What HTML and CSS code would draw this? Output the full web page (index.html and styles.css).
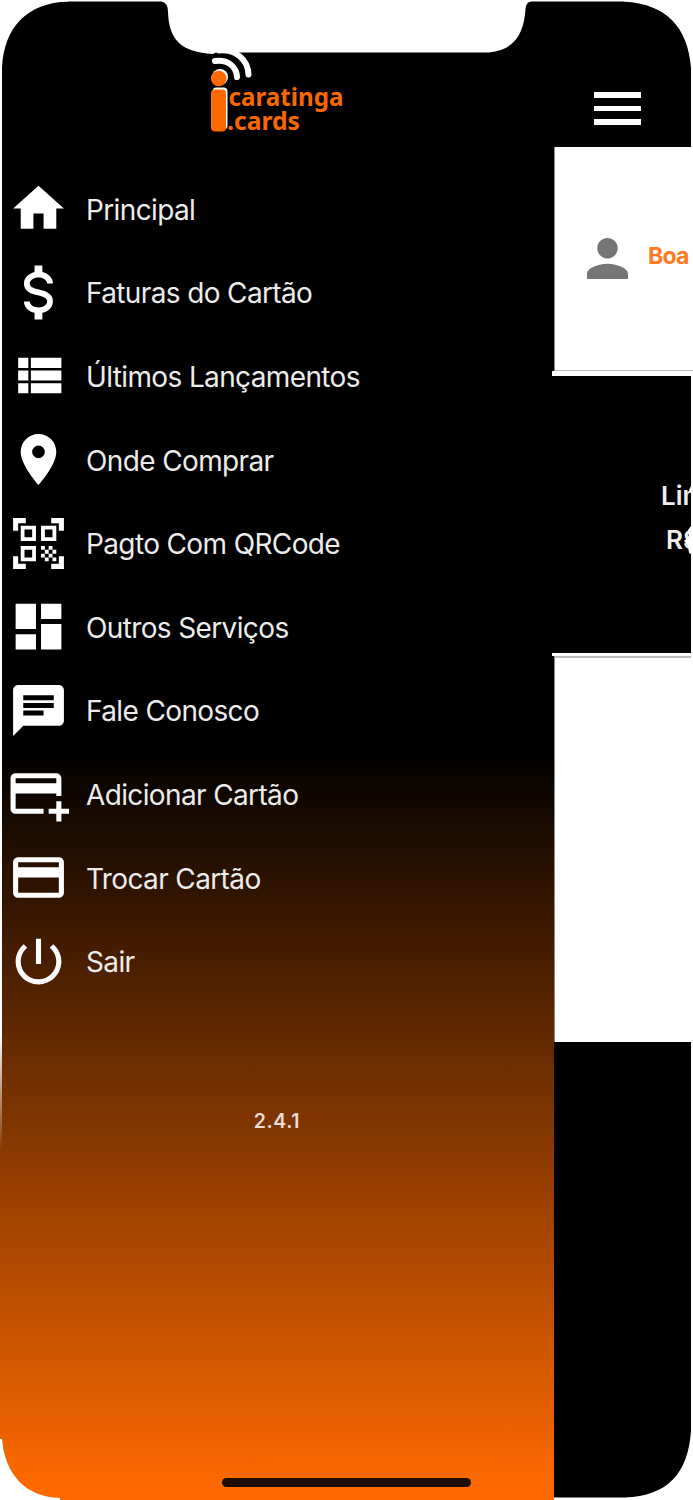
FILE: index.html
```html
<!DOCTYPE html>
<html lang="pt-BR">
<head>
<meta charset="utf-8">
<title>icaratinga.cards</title>
<link rel="stylesheet" href="styles.css">
</head>
<body>
<div class="phone">
  <aside class="drawer">
    <header class="brand">
      <svg class="logo" width="140" height="90" viewBox="208 47 140 90" role="img" aria-label="icaratinga.cards">
        <g fill="none" stroke="#fff" stroke-width="6" stroke-linecap="round">
          <path d="M215 61C228 59 236.500 67 237 77"/>
          <path d="M219 50.500C236 49 248 60 248.500 74.500"/>
        </g>
        <circle cx="220" cy="77" r="8" fill="#fff"/>
        <rect x="212.500" y="87.500" width="15" height="42" rx="4" fill="#fff"/>
        <circle cx="218.700" cy="78.500" r="7.800" fill="#ff6a00"/>
        <rect x="211" y="89.500" width="15" height="42" rx="4" fill="#ff6a00"/>
        <text class="wordmark" x="228.500" y="105.500" textLength="115" lengthAdjust="spacingAndGlyphs">caratinga</text>
        <text class="wordmark" x="227" y="129.500" textLength="73" lengthAdjust="spacingAndGlyphs">.cards</text>
      </svg>
    </header>
    <nav class="menu">
      <a class="item"><svg class="icon" viewBox="0 0 24 24"><path d="M10 20v-6h4v6h5v-8h3L12 3 2 12h3v8z"/></svg><span class="label">Principal</span></a>
      <a class="item"><svg class="icon" viewBox="0 0 24 24"><path transform="translate(-1.700 -2.200) scale(1.140 1.180)" d="M7,15H9C9,16.080 10.370,17 12,17C13.630,17 15,16.080 15,15C15,13.900 13.960,13.500 11.760,12.970C9.640,12.440 7,11.780 7,9C7,7.210 8.470,5.690 10.650,5.180V3H13.350V5.180C15.530,5.690 17,7.210 17,9H15C15,7.920 13.630,7 12,7C10.370,7 9,7.920 9,9C9,10.100 10.040,10.500 12.240,11.030C14.360,11.560 17,12.220 17,15C17,16.790 15.530,18.310 13.350,18.820V21H10.650V18.820C8.470,18.310 7,16.790 7,15Z"/></svg><span class="label">Faturas do Cartão</span></a>
      <a class="item"><svg class="icon" viewBox="0 0 24 24"><path d="M4 14h4v-4H4v4zm0 5h4v-4H4v4zM4 9h4V5H4v4zm5 5h12v-4H9v4zm0 5h12v-4H9v4zM9 5v4h12V5H9z"/></svg><span class="label">Últimos Lançamentos</span></a>
      <a class="item"><svg class="icon" viewBox="0 0 24 24"><path d="M12 2C8.130 2 5 5.130 5 9c0 5.250 7 13 7 13s7-7.750 7-13c0-3.870-3.130-7-7-7zm0 9.500a2.500 2.500 0 0 1 0-5 2.500 2.500 0 0 1 0 5z"/></svg><span class="label">Onde Comprar</span></a>
      <a class="item"><svg class="icon" viewBox="0 0 24 24"><path d="M9.500 6.500v3h-3v-3h3M11 5H5v6h6V5zM9.500 14.500v3h-3v-3h3M11 13H5v6h6v-6zM17.500 6.500v3h-3v-3h3M19 5h-6v6h6V5zM13 13h1.500v1.500H13zM14.500 14.500H16V16h-1.500zM16 13h1.500v1.500H16zM13 16h1.500v1.500H13zM14.500 17.500H16V19h-1.500zM16 16h1.500v1.500H16zM17.500 14.500H19V16h-1.500zM17.500 17.500H19V19h-1.500zM22 7h-2V4h-3V2h5zM22 22v-5h-2v3h-3v2zM2 22h5v-2H4v-3H2zM2 2v5h2V4h3V2z"/></svg><span class="label">Pagto Com QRCode</span></a>
      <a class="item"><svg class="icon" viewBox="0 0 24 24"><path d="M3 13h8V3H3v10zm0 8h8v-6H3v6zm10 0h8V11h-8v10zm0-18v6h8V3h-8z"/></svg><span class="label">Outros Serviços</span></a>
      <a class="item"><svg class="icon" viewBox="0 0 24 24"><path d="M20 2H4c-1.100 0-2 .9-2 2v18l4-4h14c1.100 0 2-.9 2-2V4c0-1.100-.9-2-2-2zM6 9h12v2H6V9zm8 5H6v-2h8v2zm4-6H6V6h12v2z"/></svg><span class="label">Fale Conosco</span></a>
      <a class="item"><svg class="icon" viewBox="0 0 24 24"><path d="M21,18H24V20H21V23H19V20H16V18H19V15H21V18M19,8V6H3V8H19M19,12H3V18H14V20H3C1.890,20 1,19.100 1,18V6C1,4.890 1.890,4 3,4H19A2,2 0 0,1 21,6V13H19V12Z"/></svg><span class="label">Adicionar Cartão</span></a>
      <a class="item"><svg class="icon" viewBox="0 0 24 24"><path d="M20 4H4c-1.110 0-2 .89-2 2v12c0 1.110.89 2 2 2h16c1.110 0 2-.89 2-2V6c0-1.110-.89-2-2-2zm0 14H4v-6h16v6zm0-10H4V6h16v2z"/></svg><span class="label">Trocar Cartão</span></a>
      <a class="item"><svg class="icon" viewBox="0 0 24 24"><path d="M13 3h-2v10h2V3zm4.830 2.170l-1.420 1.420C17.990 7.860 19 9.810 19 12c0 3.870-3.130 7-7 7s-7-3.130-7-7c0-2.190 1.010-4.140 2.580-5.420L6.170 5.170C4.230 6.820 3 9.260 3 12c0 4.970 4.030 9 9 9s9-4.030 9-9c0-2.740-1.230-5.180-3.170-6.830z"/></svg><span class="label">Sair</span></a>
    </nav>
    <p class="version">2.4.1</p>
  </aside>
  <main class="page">
    <div class="topbar">
      <div class="burger"><span></span><span></span><span></span></div>
    </div>
    <section class="greeting">
      <svg class="avatar" viewBox="4 4 16 16"><path d="M12 12c2.210 0 4-1.790 4-4s-1.790-4-4-4-4 1.790-4 4 1.790 4 4 4zm0 2c-2.670 0-8 1.340-8 4v2h16v-2c0-2.660-5.330-4-8-4z"/></svg>
      <span class="hello">Boa</span>
    </section>
    <div class="rule"></div>
    <section class="limit">
      <span>Lim</span>
      <span class="amount">R$</span>
    </section>
    <div class="rule thin"></div>
    <section class="blank"></section>
  </main>
  <svg class="bezel" width="693" height="1500" viewBox="0 0 693 1500">
    <defs>
      <linearGradient id="edge" x1="0" y1="0" x2="0" y2="1">
        <stop offset=".9" stop-color="#fff"/>
        <stop offset="1" stop-color="#fff" stop-opacity="0"/>
      </linearGradient>
    </defs>
    <g fill="#fff">
      <path d="M0 0H693V1.500H0z"/>
      <path d="M2 0V68C4 27 27 3 68 1.500V0z"/>
      <path d="M691 0V68C688 27 666 4 624 1.500V0z"/>
      <path d="M162 0V1.500Q168 3 168 12C169 40 181 52 213 54L216 52.500H489C515 50 524 33 525.500 9Q526 2 531 1.500V0z"/>
      <path d="M691 0H693V370H691zM691 376H693V1500H691z"/>
      <path d="M0 1439H2C5 1475 26 1497 60 1498V1500H0z"/>
      <path d="M554 1497.500H625C667 1496 688 1474 691 1431H693V1500H554z"/>
      <path d="M691 486L689 490 691 493zM691 526L688 530 689 536 684 541 688 546 689 553 691 554z"/>
    </g>
    <path fill="url(#edge)" d="M0 0H2V1150H0z"/>
  </svg>
  <div class="home-indicator"></div>
</div>
</body>
</html>
```
FILE: styles.css
```css
* { box-sizing: border-box; }

body {
  margin: 0;
  background: #fff;
  font-family: Inter, "Liberation Sans", sans-serif;
}

.phone {
  position: relative;
  display: grid;
  grid-template-columns: 554px 139px;
  width: 693px;
  height: 1500px;
  overflow: hidden;
}

.drawer {
  display: flex;
  flex-direction: column;
  background: linear-gradient(#000 0, #000 750px, #ff6a00 1490px);
}

.brand {
  height: 167px;
  padding: 47px 0 0 208px;
}

.logo { display: block; }

.wordmark {
  font: 700 24.500px "Noto Sans", sans-serif;
  fill: #f96800;
}

.menu {
  display: flex;
  flex-direction: column;
}

.item {
  display: flex;
  align-items: center;
  gap: 17px;
  height: 83.6px;
  padding-left: 8px;
  color: #ececec;
  font-size: 28px;
  letter-spacing: -.63px;
  white-space: nowrap;
}

.icon {
  width: 61px;
  height: 61px;
  fill: #fff;
}

.label { padding-top: 2px; }

.version {
  margin: 101px 0 0;
  color: #eadfd8;
  font-size: 19.500px;
  font-weight: 600;
  letter-spacing: .6px;
  line-height: 34px;
  text-align: center;
}

.page {
  display: flex;
  flex-direction: column;
  background: #000;
}

.topbar {
  height: 147px;
  padding: 92px 0 0 40px;
}

.burger {
  display: flex;
  flex-direction: column;
  gap: 8px;
  width: 47px;
}

.burger span {
  height: 5.500px;
  background: #fff;
}

.greeting {
  display: flex;
  align-items: center;
  gap: 20px;
  height: 224px;
  padding-left: 32px;
  overflow: hidden;
  background: #fff;
  border-left: 1px solid #888;
  border-bottom: 1px solid #bbb;
}

.avatar {
  flex: none;
  width: 41px;
  height: 41px;
  fill: #757575;
}

.hello {
  padding-bottom: 5px;
  color: #ff7a20;
  font-size: 23px;
  font-weight: 700;
  letter-spacing: -.8px;
}

.rule {
  height: 5px;
  margin-left: -2px;
  background: #fff;
}

.rule.thin { height: 3px; }

.limit {
  display: flex;
  flex-direction: column;
  align-items: flex-start;
  height: 277px;
  padding: 98px 0 0 107px;
  overflow: hidden;
  color: #eee;
  font-size: 26px;
  font-weight: 600;
  line-height: 44px;
}

.amount { padding-left: 5px; }

.blank {
  height: 386px;
  background: #fff;
  border-top: 2px solid #bbb;
  border-left: 1px solid #888;
}

.bezel {
  position: absolute;
  inset: 0;
  pointer-events: none;
}

.home-indicator {
  position: absolute;
  left: 222px;
  bottom: 13px;
  width: 249px;
  height: 9px;
  border-radius: 5px;
  background: #1c0c02;
}
```
